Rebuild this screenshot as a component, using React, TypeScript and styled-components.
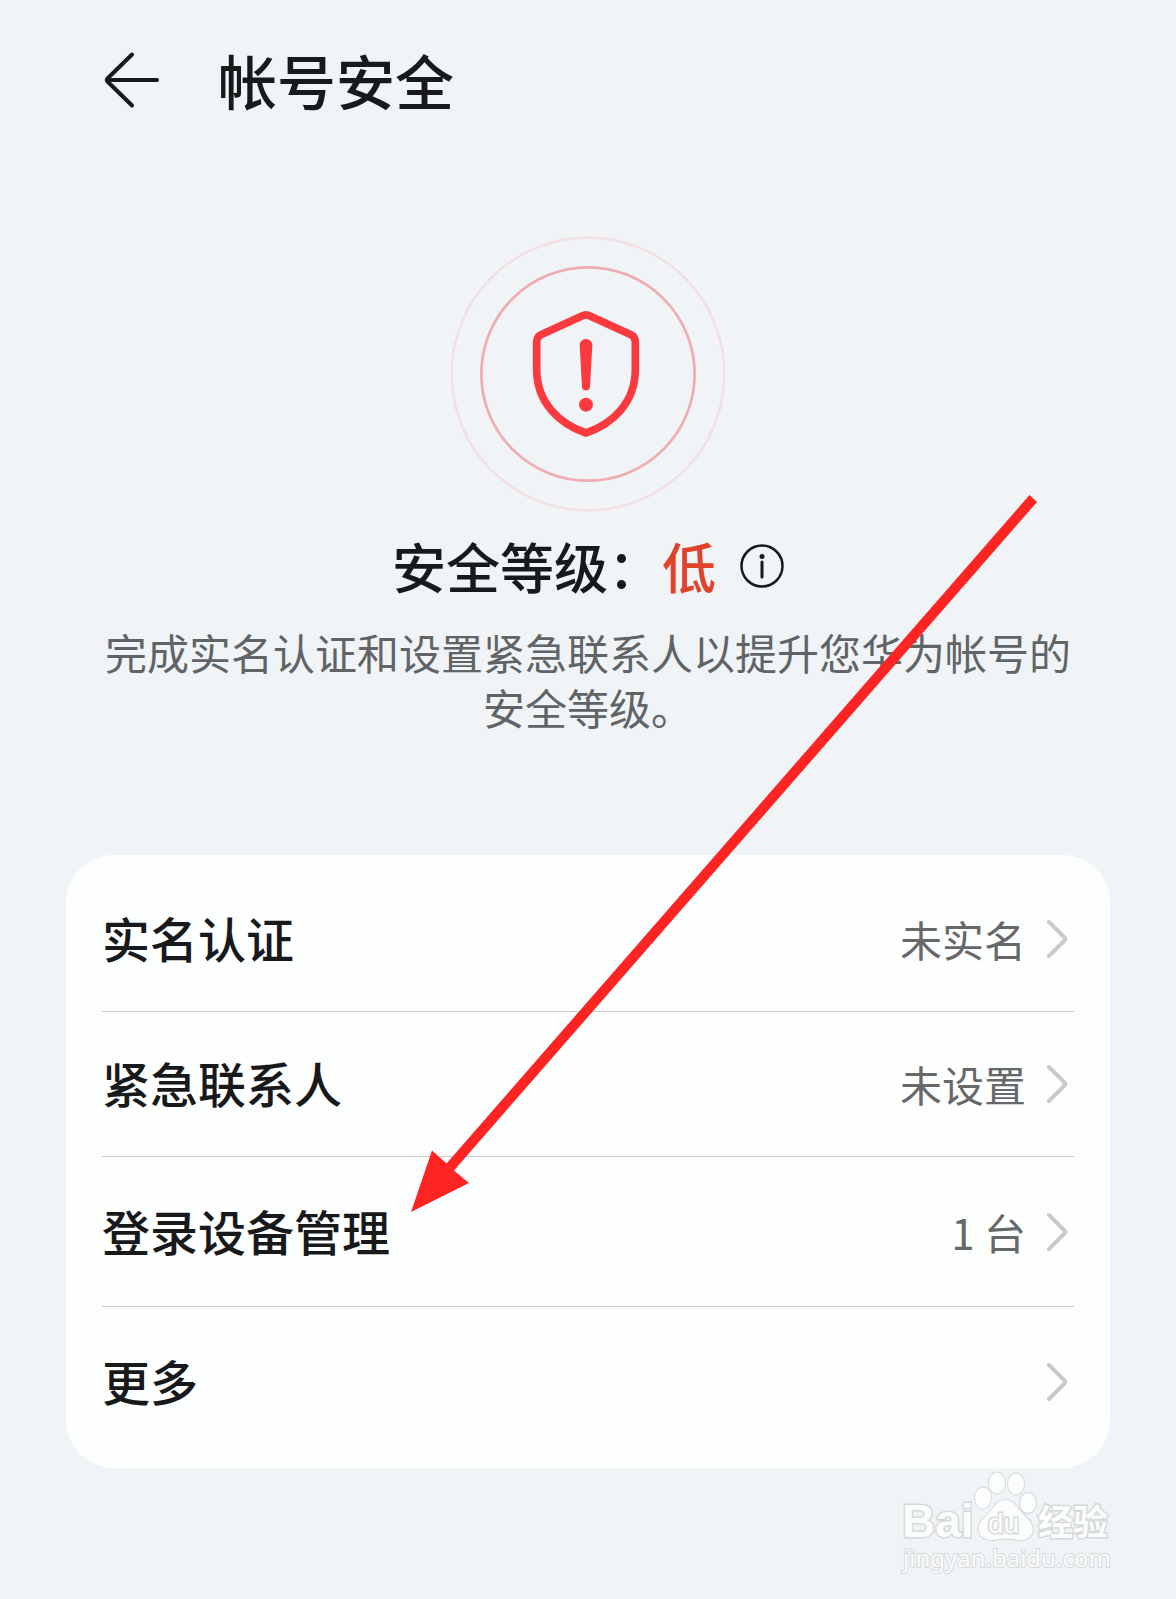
import React from 'react';
import styled, { createGlobalStyle } from 'styled-components';

const GlobalStyle = createGlobalStyle`
  *, *::before, *::after { box-sizing: border-box; }
  html { background: #f0f4f6; }
  body { margin: 0; font-family: "Noto Sans CJK SC", "Noto Sans", sans-serif; color: #17191b; }
  h1, h2, p, ul { margin: 0; padding: 0; font-weight: inherit; }
  button { font: inherit; color: inherit; background: none; border: 0; padding: 0; cursor: pointer; }
  svg { display: block; }
`;

const Page = styled.div`
  position: relative;
  min-height: 100vh;
  padding: 0 66px 130px;
  overflow: hidden;
`;

const Header = styled.header`
  display: flex;
  align-items: center;
  gap: 56px;
  height: 160px;
  padding: 0 36px;
`;

const BackButton = styled.button`
  flex: none;
`;

const Title = styled.h1`
  font-size: 59px;
  line-height: 80px;
  font-weight: 500;
`;

const Summary = styled.section`
  display: flex;
  flex-direction: column;
  align-items: center;
  padding: 76px 36px 121px;
`;

const Level = styled.h2`
  display: flex;
  align-items: center;
  margin-top: 14px;
  font-size: 54px;
  line-height: 80px;
  font-weight: 500;
`;

const LevelValue = styled.span`
  color: #e0432b;
`;

const InfoButton = styled.button`
  margin-left: 24px;
`;

const Hint = styled.p`
  margin-top: 18px;
  font-size: 42px;
  line-height: 55px;
  text-align: center;
  color: #616466;
`;

const Card = styled.ul`
  list-style: none;
  padding: 12px 36px;
  border-radius: 48px;
  background: #fdfefe;
`;

const Item = styled.li`
  & + & { border-top: 1px solid #c9cbcd; }
`;

const Row = styled.button<{ $tall?: boolean }>`
  display: flex;
  align-items: center;
  width: 100%;
  height: ${p => (p.$tall ? 149 : 144)}px;
  padding-right: 6px;
  text-align: left;
`;

const Label = styled.span`
  flex: 1;
  padding-bottom: 4px;
  font-size: 48px;
  line-height: 64px;
  font-weight: 500;
`;

const Value = styled.span`
  margin-right: 20px;
  font-size: 42px;
  line-height: 56px;
  color: #66686a;
`;

const Pointer = styled.svg`
  position: absolute;
  left: calc(50% - 177px);
  top: 495px;
  pointer-events: none;
`;

const Watermark = styled.svg`
  position: absolute;
  right: 56px;
  bottom: 20px;
  pointer-events: none;
`;

const Chevron = () => (
  <svg width="22" height="40" viewBox="0 0 22 40" fill="none" stroke="#c8cacc" strokeWidth="4" strokeLinecap="round" strokeLinejoin="round" aria-hidden="true">
    <path d="M3 3 18.5 18.5Q20 20 18.5 21.5L3 37" />
  </svg>
);

const rows = [
  { label: '实名认证', value: '未实名' },
  { label: '紧急联系人', value: '未设置' },
  { label: '登录设备管理', value: '1 台', tall: true },
  { label: '更多', value: '', tall: true },
];

export default function App() {
  return (
    <Page>
      <GlobalStyle />
      <Header>
        <BackButton aria-label="返回">
          <svg width="60" height="60" viewBox="0 0 60 60" fill="none" stroke="#17191b" strokeWidth="4" strokeLinecap="round" strokeLinejoin="round">
            <path d="M55 30H5M30 4.500 5.500 28.500Q4 30 5.500 31.500L30 55.500" />
          </svg>
        </BackButton>
        <Title>帐号安全</Title>
      </Header>
      <main>
        <Summary>
          <svg width="276" height="276" viewBox="60 48 828 828" fill="none" aria-hidden="true">
            <circle cx="474" cy="462" r="409" stroke="#f2e0e5" strokeWidth="8" />
            <circle cx="474" cy="462" r="320" stroke="#f0abb1" strokeWidth="8" />
            <path d="M456 288Q468 281 480 288L603 344Q616 350 616 366V448C616 548 548 612 468 639C388 612 320 548 320 448V366Q320 350 333 344Z" stroke="#fb3a40" strokeWidth="23" strokeLinejoin="round" />
            <path d="M449 376A19 19 0 0 1 487 376L480 500A12 11 0 0 1 456 500Z" fill="#fb3a40" />
            <circle cx="468" cy="554" r="21" fill="#fb3a40" />
          </svg>
          <Level>
            安全等级：<LevelValue>低</LevelValue>
            <InfoButton aria-label="安全等级说明">
              <svg width="44" height="44" viewBox="0 0 44 44" fill="none" stroke="#17191b">
                <circle cx="22" cy="22" r="20.500" strokeWidth="2.500" />
                <path d="M22 18V33" strokeWidth="3" strokeLinecap="round" />
                <circle cx="22" cy="12.500" r="2.500" fill="#17191b" stroke="none" />
              </svg>
            </InfoButton>
          </Level>
          <Hint>完成实名认证和设置紧急联系人以提升您华为帐号的安全等级。</Hint>
        </Summary>
        <Card>
          {rows.map(r => (
            <Item key={r.label}>
              <Row $tall={r.tall}>
                <Label>{r.label}</Label>
                {r.value && <Value>{r.value}</Value>}
                <Chevron />
              </Row>
            </Item>
          ))}
        </Card>
      </main>
      <Pointer width="630" height="720" viewBox="411 495 630 720" aria-hidden="true">
        <path d="M1029.500 495 1037 502 454 1170.500 469 1183 411 1212 432 1150.500 446.500 1163.500Z" fill="#ff2424" />
      </Pointer>
      <Watermark width="220" height="110" viewBox="0 0 220 110" fill="#fcfdfd" stroke="#d6d9db" strokeWidth="2" paintOrder="stroke" aria-label="Baidu 经验">
        <text x="2" y="68" fontFamily="Liberation Sans, sans-serif" fontWeight="700" fontSize="46" strokeWidth="3">Bai</text>
        <ellipse cx="83" cy="29" rx="8" ry="10.500" />
        <ellipse cx="97" cy="14" rx="8" ry="10.500" />
        <ellipse cx="116" cy="15" rx="8" ry="10.500" />
        <ellipse cx="128" cy="34" rx="8" ry="10" />
        <path d="M105 31C115 31 117 40 125 47C138 58 134 72 118 71C110 69 101 69 94 71C78 72 73 58 86 47C94 40 96 31 105 31Z" />
        <text x="88" y="64" fontFamily="Liberation Sans, sans-serif" fontSize="28" strokeWidth="3">du</text>
        <text x="138" y="66" fontFamily="Noto Sans CJK SC, sans-serif" fontWeight="700" fontSize="35" strokeWidth="3">经验</text>
        <text x="3" y="98" fontFamily="Noto Sans, sans-serif" fontSize="24" strokeWidth="2">jingyan.baidu.com</text>
      </Watermark>
    </Page>
  );
}
